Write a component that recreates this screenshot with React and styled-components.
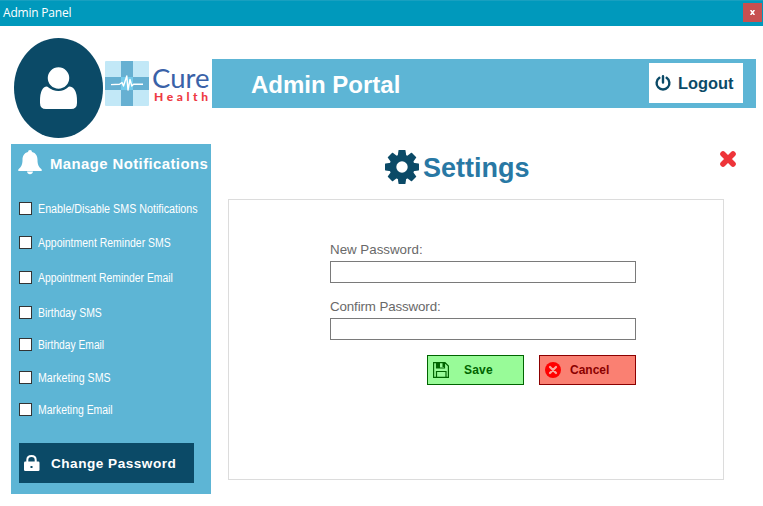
import React from "react";
import styled, { createGlobalStyle } from "styled-components";

const Global = createGlobalStyle`
  * { box-sizing: border-box; }
  body { margin: 0; background: #fff; font-family: "Liberation Sans", Arial, sans-serif; overflow: hidden; }
  button { font-family: inherit; padding: 0; margin: 0; }
`;
const Window = styled.div`
  width: 763px; height: 506px; background: #fff; overflow: hidden;
`;
const TitleBar = styled.header`
  height: 26px; background: #0099bc; border-top: 1px solid #18a0c0; color: #fff;
  display: flex; justify-content: space-between; padding: 0 1px 0 3px;
  font: 12px/24px "Open Sans", "Noto Sans", sans-serif;
`;
const Title = styled.span`
  letter-spacing: -0.2px;
`;
const WindowClose = styled.button`
  width: 19px; height: 19px; margin-top: 2px; border: 0; background: #c75050;
  display: grid; place-items: center;
`;
const Header = styled.div`
  height: 118px; display: flex; padding: 12px 7px 0 14px;
`;
const Avatar = styled.svg`
  width: 89px; height: 100px; flex: none;
`;
const Brand = styled.div`
  width: 109px; height: 50px; margin-top: 21px; display: flex; padding: 2px 0 0 2px; flex: none;
`;
const BrandText = styled.div`
  margin-left: 3px; width: 60px; padding-top: 6px; white-space: nowrap;
`;
const Cure = styled.div`
  font: 400 27.5px/22px Lato, sans-serif; color: #3a62a8; height: 23px;
`;
const Health = styled.div`
  font: 900 12px/13px Lato, sans-serif; color: #ee3a43; letter-spacing: 3.6px; padding-left: 2px;
`;
const Banner = styled.div`
  flex: 1; height: 49px; margin-top: 21px; background: #5db5d5; color: #fff;
  display: flex; justify-content: space-between; padding: 4px 13px 0 39px;
`;
const BannerTitle = styled.h1`
  margin: 0; font-size: 24px; line-height: 44px; font-weight: 700;
`;
const Logout = styled.button`
  width: 94px; height: 40px; border: 0; background: #fff; color: #0b4a67;
  display: flex; align-items: center; gap: 7px; padding-left: 6px; font-size: 16.4px; font-weight: 700;
`;
const Body = styled.div`
  display: flex; padding-left: 11px; align-items: flex-start;
`;
const Sidebar = styled.aside`
  width: 200px; height: 350px; background: #5db5d5; color: #fff; flex: none;
`;
const SidebarHead = styled.div`
  display: flex; height: 50px; padding: 5px 0 0 7px; gap: 8px;
`;
const SidebarTitle = styled.h2`
  margin: 0; font-size: 14.9px; line-height: 30px; letter-spacing: 0.42px; white-space: nowrap;
`;
const Options = styled.div`
  display: grid; grid-template-rows: 34px 35px 35px 32px 33px 32px 48px; padding-left: 8px;
`;
const Option = styled.label`
  display: flex; align-items: flex-start; padding-top: 8px; gap: 6px; white-space: nowrap;
`;
const Box = styled.input`
  appearance: none; width: 13px; height: 13px; margin: 0; flex: none; border: 1px solid #333; background: #fff;
`;
const OptionText = styled.span`
  font-size: 12px; line-height: 14px; transform: scaleX(${(p) => p.$stretch}); transform-origin: left;
`;
const ChangePassword = styled.button`
  width: 175px; height: 40px; margin: 0 0 0 8px; border: 0; background: #0b4a67; color: #fff;
  display: flex; align-items: center; padding-left: 4px; gap: 11px;
  font-size: 13.6px; font-weight: 700; letter-spacing: 0.5px; white-space: nowrap;
`;
const Main = styled.main`
  margin-left: 17px; width: 510px;
`;
const MainHead = styled.div`
  height: 55px; display: flex; padding: 6px 1px 0 157px;
`;
const Heading = styled.h2`
  margin: 1px auto 0 4px; font-size: 27px; line-height: 35px; color: #2878a4;
`;
const ClosePanel = styled.button`
  width: 18px; height: 18px; border: 0; background: none; display: block;
`;
const Panel = styled.form`
  width: 496px; height: 281px; border: 1px solid #dcdcdc; padding: 42px 0 0 101px;
`;
const Field = styled.label`
  display: block; height: 57px; width: 306px; color: #696969; font-size: 13.33px; line-height: 15px; letter-spacing: ${(p) => p.$spacing || 0};
`;
const Input = styled.input`
  display: block; width: 306px; height: 22px; margin-top: 4px; border: 1px solid #7a7a7a; border-radius: 0; background: #fff;
`;
const Actions = styled.div`
  display: flex; gap: 15px; padding-left: 97px; margin-top: -1px;
`;
const Action = styled.button`
  width: 97px; height: 30px; display: flex; align-items: center; padding-left: 5px;
  gap: ${(p) => p.$gap}; background: ${(p) => p.$bg}; color: ${(p) => p.$fg};
  border: 1px solid ${(p) => p.$fg}; font-size: 12px; font-weight: 700; letter-spacing: ${(p) => p.$spacing || 0};
`;
const Icon = styled.svg`
  display: block; flex: none;
`;

const options = [
  ["Enable/Disable SMS Notifications", 0.893],
  ["Appointment Reminder SMS", 0.873],
  ["Appointment Reminder Email", 0.864],
  ["Birthday SMS", 0.87],
  ["Birthday Email", 0.855],
  ["Marketing SMS", 0.885],
  ["Marketing Email", 0.868],
];

function Logo() {
  return (
    <Icon width="44" height="45" viewBox="0 0 44 45">
      <rect width="44" height="45" rx="1" fill="#c2e8f7" />
      <path d="M16 0h12v45H16zM0 16h44v13H0z" fill="#66b0d2" />
      <path d="M16 16h12v13H16z" fill="#73cbeb" />
      <path d="M6 23.600 14.500 23.300 17 21.500 18.500 25 21.800 15 23 29 25 18.500 26.800 25 28.500 23.300H38" fill="none" stroke="#fff" strokeWidth="1.400" strokeLinejoin="round" />
    </Icon>
  );
}

function Gear() {
  return (
    <Icon width="34" height="34" viewBox="-17 -17 34 34">
      <g fill="#0b4a67">
        <circle r="12.600" />
        {[0, 45, 90, 135, 180, 225, 270, 315].map((a) => (
          <path key={a} d="M-4.300-11-3.500-16.500Q-3.400-17-2.800-17H2.800Q3.400-17 3.500-16.500L4.300-11Z" transform={`rotate(${a})`} />
        ))}
      </g>
      <circle r="5.700" fill="#fff" />
    </Icon>
  );
}

export default function App() {
  return (
    <Window>
      <Global />
      <TitleBar>
        <Title>Admin Panel</Title>
        <WindowClose type="button" aria-label="Close window">
          <Icon width="5" height="5" viewBox="0 0 5 5"><path d="M.6 0 4.400 5M4.400 0 .6 5" stroke="#fff" strokeWidth="1.500" /></Icon>
        </WindowClose>
      </TitleBar>
      <Header>
        <Avatar viewBox="0 0 89 100">
          <ellipse cx="44.500" cy="50" rx="44.500" ry="50" fill="#0b4a67" />
          <path d="M33 48.500Q26 49 26 63V65Q26 71 32 71H57Q63 71 63 65V63Q63 49 55 48.500Q50 53 44.500 53T33 48.500Z" fill="#fff" />
          <circle cx="44.500" cy="40" r="11.500" fill="#fff" stroke="#0b4a67" strokeWidth="1.500" />
        </Avatar>
        <Brand>
          <Logo />
          <BrandText><Cure>Cure</Cure><Health>Health</Health></BrandText>
        </Brand>
        <Banner>
          <BannerTitle>Admin Portal</BannerTitle>
          <Logout type="button">
            <Icon width="16" height="16" viewBox="0 0 16 16" fill="none" stroke="#0b4a67" strokeWidth="2.400" strokeLinecap="round">
              <path d="M8 1.200V7.500M4.400 2.800a6.400 6.400 0 1 0 7.200 0" />
            </Icon>
            Logout
          </Logout>
        </Banner>
      </Header>
      <Body>
        <Sidebar>
          <SidebarHead>
            <Icon width="24" height="26" viewBox="0 0 24 26" fill="#fff">
              <path d="M12 1q2 0 2 2c4 1 5.500 4 5.500 8 0 5 1.500 7 4.200 9.500V22H.3v-1.500C3 18 4.500 16 4.500 11c0-4 1.500-7 5.500-8q0-2 2-2ZM9 22.500h6q-.500 2.800-3 2.800t-3-2.800Z" />
            </Icon>
            <SidebarTitle>Manage Notifications</SidebarTitle>
          </SidebarHead>
          <Options>
            {options.map(([label, stretch]) => (
              <Option key={label}><Box type="checkbox" /><OptionText $stretch={stretch}>{label}</OptionText></Option>
            ))}
          </Options>
          <ChangePassword type="button">
            <Icon width="17" height="17" viewBox="0 0 17 17">
              <path d="M4.300 8V5q0-4 4.200-4t4.200 4v3" fill="none" stroke="#fff" strokeWidth="2" />
              <rect x="1" y="6.500" width="15.500" height="9.500" rx="1.200" fill="#fff" />
              <rect x="7.500" y="11" width="2" height="2" fill="#0b4a67" />
            </Icon>
            Change Password
          </ChangePassword>
        </Sidebar>
        <Main>
          <MainHead>
            <Gear />
            <Heading>Settings</Heading>
            <ClosePanel type="button" aria-label="Close settings">
              <Icon width="18" height="18" viewBox="0 0 18 18"><path d="M4 4 14 14M14 4 4 14" stroke="#ee3439" strokeWidth="5.600" strokeLinecap="round" /></Icon>
            </ClosePanel>
          </MainHead>
          <Panel>
            <Field>New Password:<Input type="password" /></Field>
            <Field $spacing="-0.12px">Confirm Password:<Input type="password" /></Field>
            <Actions>
              <Action type="button" $bg="#98fb98" $fg="#006400" $gap="15px" $spacing="0.200px">
                <Icon width="16" height="16" viewBox="0 0 16 16" fill="none" stroke="#006400" strokeWidth="1.200">
                  <path d="M.6.6H12L15.400 4V15.400H.6ZM3.500 15.400V9.500h9.500v5.900M3.500.6V6h8V.6" />
                  <path d="M4 0h3v6H4zM9.500 1h2v4h-2z" fill="#006400" stroke="none" />
                </Icon>
                Save
              </Action>
              <Action type="button" $bg="#fa8072" $fg="#8b0000" $gap="9px">
                <Icon width="16" height="16" viewBox="0 0 16 16">
                  <circle cx="8" cy="8" r="8" fill="#f00" />
                  <path d="m5 5 6 6m0-6-6 6" stroke="#fba79d" strokeWidth="2.200" strokeLinecap="round" />
                </Icon>
                Cancel
              </Action>
            </Actions>
          </Panel>
        </Main>
      </Body>
    </Window>
  );
}
